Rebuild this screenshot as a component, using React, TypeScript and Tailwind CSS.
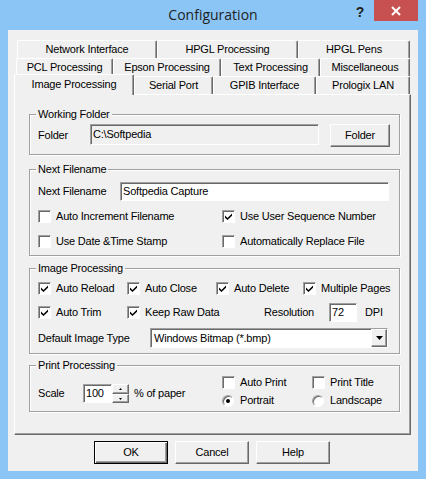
import React from "react"

const raised =
  "border border-t-white border-l-white border-r-[#696969] border-b-[#696969] shadow-[inset_-1px_-1px_0_#a0a0a0]"
const sunken =
  "border border-t-[#a0a0a0] border-l-[#a0a0a0] border-r-white border-b-white shadow-[inset_1px_1px_0_#696969]"

const row1 = [
  { label: "Network Interface", w: "w-[140px]" },
  { label: "HPGL Processing", w: "w-[141px]" },
  { label: "HPGL Pens", w: "w-[112px]" },
]

const row2 = [
  { label: "PCL Processing", w: "w-[97px]" },
  { label: "Epson Processing", w: "w-[108px]" },
  { label: "Text Processing", w: "w-[99px]" },
  { label: "Miscellaneous", w: "w-[90px]" },
]

const row3 = [
  { label: "Image Processing", w: "w-[120px]", active: true },
  { label: "Serial Port", w: "w-[79px]" },
  { label: "GPIB Interface", w: "w-[103px]" },
  { label: "Prologix LAN", w: "w-[94px]" },
]

function Tab({ label, w, active }: { label: string; w: string; active?: boolean }) {
  return (
    <div
      className={`${w} flex shrink-0 items-center justify-center rounded-t-[2px] border-t border-r border-l border-t-white border-r-[#696969] border-l-white bg-[#f0f0f0] shadow-[inset_-1px_0_0_#a0a0a0] ${
        active ? "relative z-10 -mb-px h-[21px] pb-[2px]" : "h-[18px]"
      }`}
    >
      {label}
    </div>
  )
}

function Check({ label, checked, w }: { label: string; checked?: boolean; w?: string }) {
  return (
    <div className={`flex h-[13px] shrink-0 items-center gap-[5px] ${w ?? ""}`}>
      <span className={`flex h-[13px] w-[13px] shrink-0 items-center justify-center bg-white ${sunken}`}>
        {checked && (
          <svg width="7" height="7" viewBox="0 0 7 7">
            <path d="M0 2.5 L2.5 5 L7 0.5 L7 2.8 L2.5 7 L0 4.8 Z" fill="black" />
          </svg>
        )}
      </span>
      <span className="whitespace-nowrap">{label}</span>
    </div>
  )
}

function Radio({ label, checked, w }: { label: string; checked?: boolean; w?: string }) {
  return (
    <div className={`flex h-[13px] shrink-0 items-center gap-[6px] ${w ?? ""}`}>
      <span className="flex h-[12px] w-[12px] shrink-0 items-center justify-center rounded-full border border-t-[#a0a0a0] border-l-[#a0a0a0] border-r-white border-b-white bg-white shadow-[inset_1px_1px_0_#696969]">
        {checked && <span className="h-[4px] w-[4px] rounded-full bg-black" />}
      </span>
      <span className="whitespace-nowrap">{label}</span>
    </div>
  )
}

function Group({
  title,
  className,
  children,
}: {
  title: string
  className: string
  children: React.ReactNode
}) {
  return (
    <div
      className={`w-[371px] shrink-0 border border-[#a0a0a0] shadow-[inset_1px_1px_0_#fff,1px_1px_0_#fff] ${className}`}
    >
      <div className="-mt-[7px] ml-[6px] w-fit bg-[#f0f0f0] px-[2px]">{title}</div>
      {children}
    </div>
  )
}

function Spinner() {
  return (
    <div className="flex h-[19px] w-[17px] flex-col">
      <div className={`flex h-[10px] items-center justify-center bg-[#f0f0f0] ${raised}`}>
        <svg width="3" height="2" viewBox="0 0 3 2">
          <path d="M1.5 0L3 2H0z" fill="black" />
        </svg>
      </div>
      <div className={`flex h-[9px] items-center justify-center bg-[#f0f0f0] ${raised}`}>
        <svg width="3" height="2" viewBox="0 0 3 2">
          <path d="M0 0h3L1.5 2z" fill="black" />
        </svg>
      </div>
    </div>
  )
}

export default function App() {
  return (
    <div className="flex h-[479px] w-[426px] flex-col bg-[#8bc5f6] font-['Liberation_Sans',Arial,sans-serif] text-[11px] leading-[13px] tracking-[-0.2px] text-black">
      {/* title bar */}
      <div className="relative flex h-[30px] shrink-0 items-start justify-end pr-[8px]">
        <span className="absolute inset-x-0 top-[5px] text-center font-['Open_Sans',sans-serif] text-[14px] leading-[20px] tracking-normal text-[#1e1e1e]">
          Configuration
        </span>
        <span className="relative mt-[4px] mr-[10px] text-[14px] leading-[16px] font-bold text-[#1e1e1e]">?</span>
        <div className="relative flex h-[21px] w-[44px] items-center justify-center bg-[#c75050]">
          <svg width="10" height="10" viewBox="0 0 10 10">
            <path d="M1 1L9 9M9 1L1 9" stroke="white" strokeWidth="2" />
          </svg>
        </div>
      </div>

      {/* client area */}
      <div className="mx-[8px] flex h-[441px] w-[410px] flex-col bg-[#f0f0f0] pt-[10px] pl-[6px]">
        <div className="ml-[3px] flex h-[18px]">
          {row1.map((t) => (
            <Tab key={t.label} label={t.label} w={t.w} />
          ))}
        </div>
        <div className="ml-[2px] flex h-[18px]">
          {row2.map((t) => (
            <Tab key={t.label} label={t.label} w={t.w} />
          ))}
        </div>
        <div className="flex h-[18px] items-end">
          {row3.map((t) => (
            <Tab key={t.label} label={t.label} w={t.w} active={t.active} />
          ))}
        </div>

        {/* tab page */}
        <div className={`flex h-[341px] w-[397px] flex-col pt-[19px] pl-[14px] ${raised}`}>
          <Group title="Working Folder" className="h-[41px]">
            <div className="mt-[3px] flex items-start pl-[8px]">
              <span className="flex h-[23px] w-[52px] items-center">Folder</span>
              <div className={`flex h-[21px] w-[229px] items-center bg-[#f0f0f0] pl-[2px] ${sunken}`}>
                C:\Softpedia
              </div>
              <button className={`ml-[11px] h-[23px] w-[60px] bg-[#f0f0f0] ${raised}`}>Folder</button>
            </div>
          </Group>

          <Group title="Next Filename" className="mt-[14px] h-[87px]">
            <div className="mt-[6px] flex items-center pl-[8px]">
              <span className="w-[82px]">Next Filename</span>
              <div className={`flex h-[19px] w-[269px] items-center bg-white pl-[2px] ${sunken}`}>
                Softpedia Capture
              </div>
            </div>
            <div className="mt-[9px] flex pl-[8px]">
              <Check w="w-[184px]" label="Auto Increment Filename" />
              <Check checked label="Use User Sequence Number" />
            </div>
            <div className="mt-[12px] flex pl-[8px]">
              <Check w="w-[184px]" label={"Use Date &Time Stamp"} />
              <Check label="Automatically Replace File" />
            </div>
          </Group>

          <Group title="Image Processing" className="mt-[12px] h-[86px]">
            <div className="mt-[7px] flex pl-[8px]">
              <Check checked w="w-[89px]" label="Auto Reload" />
              <Check checked w="w-[89px]" label="Auto Close" />
              <Check checked w="w-[87px]" label="Auto Delete" />
              <Check checked label="Multiple Pages" />
            </div>
            <div className="mt-[7px] flex h-[20px] items-center pl-[8px]">
              <Check checked w="w-[89px]" label="Auto Trim" />
              <Check checked w="w-[137px]" label="Keep Raw Data" />
              <span className="w-[65px]">Resolution</span>
              <div className={`flex h-[19px] w-[28px] items-center bg-white pl-[2px] ${sunken}`}>72</div>
              <span className="ml-[8px]">DPI</span>
            </div>
            <div className="mt-[6px] flex items-center pl-[8px]">
              <span className="w-[112px]">Default Image Type</span>
              <div className={`flex h-[20px] w-[238px] items-center bg-white ${sunken}`}>
                <span className="flex-1 pl-[3px]">Windows Bitmap (*.bmp)</span>
                <span className={`flex h-full w-[16px] items-center justify-center bg-[#f0f0f0] ${raised}`}>
                  <svg width="7" height="4" viewBox="0 0 7 4">
                    <path d="M0 0h7L3.5 4z" fill="black" />
                  </svg>
                </span>
              </div>
            </div>
          </Group>

          <Group title="Print Processing" className="mt-[11px] h-[47px]">
            <div className="flex">
              <div className="mt-[8px] flex w-[192px] items-center pl-[8px]">
                <span className="w-[45px]">Scale</span>
                <div className={`flex h-[19px] w-[29px] items-center bg-white pl-[2px] ${sunken}`}>100</div>
                <Spinner />
                <span className="ml-[5px]">% of paper</span>
              </div>
              <div className="mt-[4px] flex flex-col gap-[5px]">
                <div className="flex">
                  <Check w="w-[90px]" label="Auto Print" />
                  <Check label="Print Title" />
                </div>
                <div className="flex">
                  <Radio checked w="w-[90px]" label="Portrait" />
                  <Radio label="Landscape" />
                </div>
              </div>
            </div>
          </Group>
        </div>

        {/* dialog buttons */}
        <div className="mt-[6px] ml-[80px] flex gap-[7px]">
          <button className="h-[23px] w-[74px] border border-black bg-[#f0f0f0] shadow-[inset_1px_1px_0_#fff,inset_-1px_-1px_0_#696969,inset_-2px_-2px_0_#a0a0a0]">
            OK
          </button>
          <button className={`h-[23px] w-[74px] bg-[#f0f0f0] ${raised}`}>Cancel</button>
          <button className={`h-[23px] w-[74px] bg-[#f0f0f0] ${raised}`}>Help</button>
        </div>
      </div>
    </div>
  )
}
